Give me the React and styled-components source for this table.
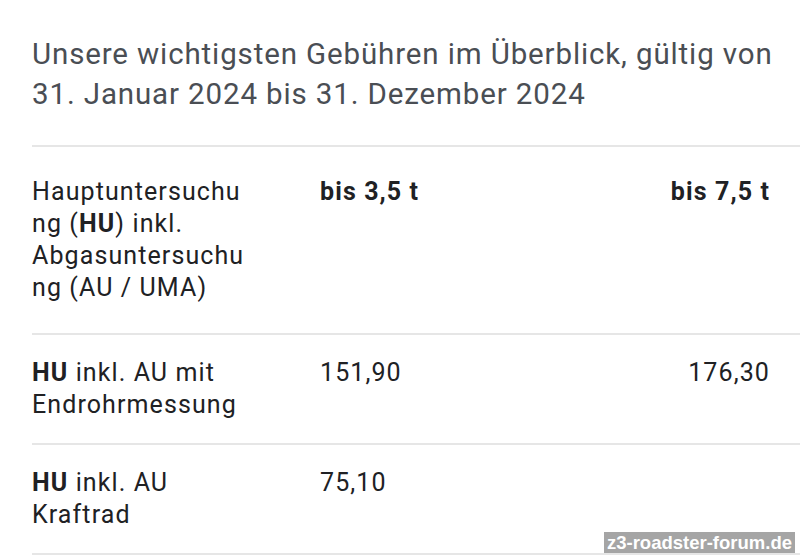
import styled, { createGlobalStyle } from 'styled-components'

const GlobalStyle = createGlobalStyle`
  html, body {
    margin: 0;
    padding: 0;
    background: #fff;
  }
  body {
    font-family: Roboto, 'Noto Sans', sans-serif;
    overflow: hidden;
  }
`

const rows = [
  { label: <><b>HU</b> inkl. AU mit Endrohrmessung</>, small: '151,90', large: '176,30' },
  { label: <><b>HU</b> inkl. AU Kraftrad</>, small: '75,10', large: '' },
]

const App = () => (
  <Page>
    <GlobalStyle />
    <Title>
      Unsere wichtigsten Gebühren im Überblick, gültig von 31. Januar 2024 bis 31. Dezember 2024
    </Title>
    <Table>
      <Row $head>
        <Label>Hauptuntersuchung (<b>HU</b>) inkl. Abgasuntersuchung (AU / UMA)</Label>
        <Cell $bold>bis 3,5 t</Cell>
        <Cell $bold $right>bis 7,5 t</Cell>
      </Row>
      {rows.map((r, i) => (
        <Row key={i}>
          <Label>{r.label}</Label>
          <Cell>{r.small}</Cell>
          <Cell $right>{r.large}</Cell>
        </Row>
      ))}
    </Table>
    <Watermark>z3-roadster-forum.de</Watermark>
  </Page>
)

const Page = styled.div`
  position: relative;
  width: 800px;
  height: 558px;
  padding: 34px 0 0 32px;
  box-sizing: border-box;
  overflow: hidden;
`
const Title = styled.h2`
  margin: 0 0 31px;
  padding-right: 10px;
  font-size: 29.5px;
  line-height: 40px;
  font-weight: 400;
  letter-spacing: 0.87px;
  color: #4a4e54;
`
const Table = styled.div`
  border-top: 2px solid #e6e6e6;
`
const Row = styled.div`
  display: grid;
  grid-template-columns: 218px 1fr auto;
  column-gap: 70px;
  padding: ${p => (p.$head ? '29px 30px 29px 0' : '22px 30px 22px 0')};
  border-bottom: 2px solid #e6e6e6;
  font-size: 25px;
  line-height: 32px;
  letter-spacing: 1.1px;
  color: #202124;
`
const Label = styled.div`
  overflow-wrap: break-word;
  min-width: 0;

  b {
    font-weight: 700;
  }
`
const Cell = styled.div`
  font-weight: ${p => (p.$bold ? 700 : 400)};
  text-align: ${p => (p.$right ? 'right' : 'left')};
`
const Watermark = styled.div`
  position: absolute;
  right: 5px;
  bottom: 5px;
  padding: 0 3px;
  background: #a5a5a5;
  color: #fff;
  font-family: 'Liberation Sans', Arial, sans-serif;
  font-weight: 700;
  font-size: 18.5px;
  line-height: 21px;
`

export default App
